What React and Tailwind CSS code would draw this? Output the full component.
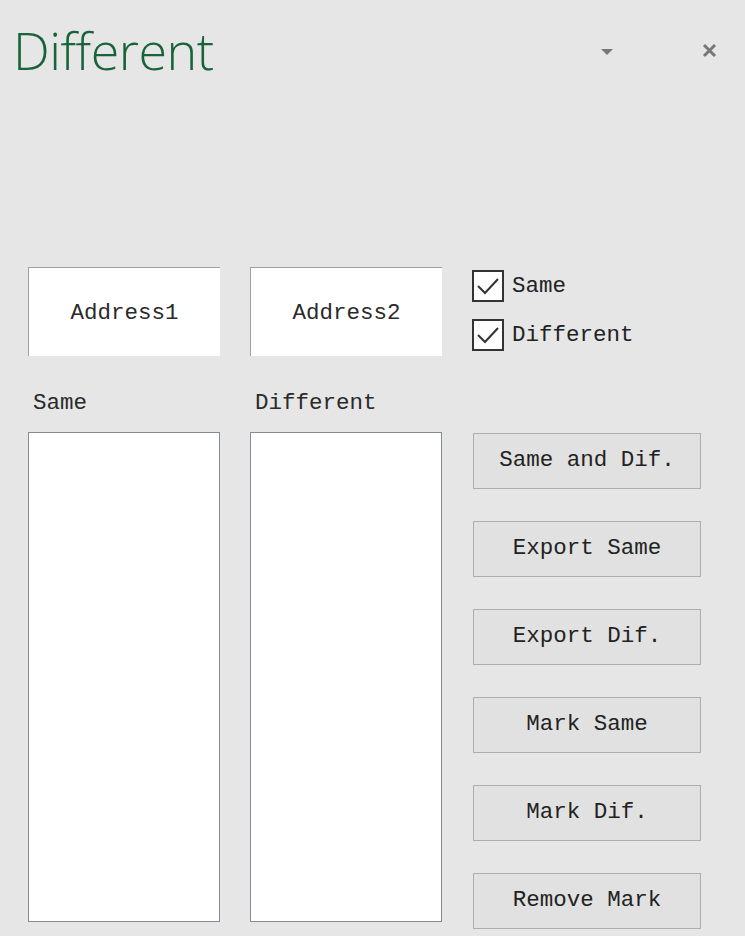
const mono = { fontFamily: '"Liberation Mono", "DejaVu Sans Mono", monospace' };

const buttons = ["Same and Dif.", "Export Same", "Export Dif.", "Mark Same", "Mark Dif.", "Remove Mark"];

function Check({ label }) {
    return (
        <div className="flex items-center h-[32px]">
            <div className="w-[32px] h-[32px] border-2 border-[#333333] bg-white flex items-center justify-center">
                <svg width="26" height="26" viewBox="0 0 26 26" fill="none">
                    <path d="M3 13 L10 20 L23 6" stroke="#333333" strokeWidth="2" />
                </svg>
            </div>
            <span className="ml-[8px] text-[22.5px] text-[#222222] leading-none" style={mono}>{label}</span>
        </div>
    );
}

export default function App() {
    return (
        <div className="w-[745px] h-[936px] bg-[#e6e6e6] overflow-hidden">
            {/* Header */}
            <div className="flex items-start h-[267px]">
                <h1 className="ml-[13px] mt-[24px] text-[52px] font-light leading-none tracking-[-0.5px] text-[#18633a]" style={{ fontFamily: '"Open Sans", "Noto Sans", sans-serif' }}>
                    Different
                </h1>
                <div className="ml-auto flex items-center mt-[43px]">
                    <svg width="12" height="6" viewBox="0 0 12 6" className="mr-[89px] mt-[2px]">
                        <path d="M0 0 H12 L6 6 Z" fill="#777777" />
                    </svg>
                    <svg width="15" height="15" viewBox="0 0 15 15" className="mr-[28px]">
                        <path d="M2 2 L13 13 M13 2 L2 13" stroke="#777777" strokeWidth="3" />
                    </svg>
                </div>
            </div>

            {/* Body */}
            <div className="flex pl-[28px] gap-[30px]">
                {[["Address1", "Same"], ["Address2", "Different"]].map(([addr, lbl]) => (
                    <div key={addr} className="w-[192px] flex flex-col">
                        <div className="h-[89px] pt-[3px] bg-white border-t border-l border-[#a0a0a0] flex items-center justify-center text-[22.5px] text-[#2a2a2a]" style={mono}>
                            {addr}
                        </div>
                        <div className="h-[76px] pl-[5px] pt-[36px] text-[22.5px] text-[#2a2a2a] leading-none" style={mono}>{lbl}</div>
                        <div className="h-[490px] bg-white border border-[#858a93]" />
                    </div>
                ))}

                <div className="flex flex-col pt-[3px]">
                    <div className="flex flex-col gap-[17px]">
                        <Check label="Same" />
                        <Check label="Different" />
                    </div>
                    <div className="mt-[82px] ml-px flex flex-col gap-[32px]">
                        {buttons.map((b) => (
                            <div key={b} className="w-[228px] h-[56px] bg-[#e1e1e1] border border-[#adadad] flex items-center justify-center text-[22.5px] text-[#222222]" style={mono}>
                                {b}
                            </div>
                        ))}
                    </div>
                </div>
            </div>
        </div>
    );
}
